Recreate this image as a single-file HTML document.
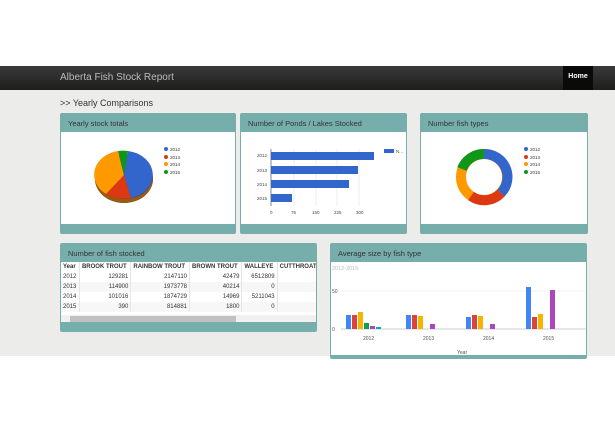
<!DOCTYPE html><html><head><style>
*{margin:0;padding:0;box-sizing:border-box}
body{width:615px;height:424px;background:#fff;font-family:"Liberation Sans",sans-serif;position:relative;overflow:hidden}
.nav{position:absolute;top:66px;left:0;width:615px;height:24px;background:linear-gradient(#3a3a3a,#1e1e1e);}
.nav .t{position:absolute;left:60px;top:6px;color:#bbb;font-size:10px}
.nav .h{position:absolute;left:563px;top:0;width:30px;height:24px;background:#0a0a0a;color:#fff;font-size:7px;font-weight:bold;text-align:center;line-height:22px}
.bg{position:absolute;top:90px;left:0;width:615px;height:266px;background:#ececea}
.yc{position:absolute;left:60px;top:98px;font-size:9px;color:#333}
.p{position:absolute;background:#fff;border:1px solid #76aeab;border-radius:2px}
.p .hd{background:#76aeab;height:18px;color:#333;font-size:7.5px;padding:5px 7px}
.p .ft{position:absolute;left:0;right:0;bottom:0;height:9px;background:#76aeab}
table{border-collapse:collapse;font-size:6px;color:#333}
td,th{padding:2px 2px;border-right:1px solid #e6e6e6;text-align:right;white-space:nowrap;height:10px}
th{text-align:left;font-weight:bold}
tr:nth-child(odd) td{background:#f7f7f7}
td:first-child{text-align:left}
</style></head><body>
<div class="nav"><div class="t">Alberta Fish Stock Report</div><div class="h">Home</div></div>
<div class="bg"></div>
<div class="yc">&gt;&gt; Yearly Comparisons</div>

<div class="p" style="left:60px;top:113px;width:176px;height:121px"><div class="hd">Yearly stock totals</div>
<svg width="176" height="94" style="position:absolute;left:0;top:18px">
<ellipse cx="63" cy="47" rx="29" ry="24" fill="#223f80"/>
<path d="M34 43 A29 24 0 0 0 92 43 L92 47 A29 24 0 0 1 34 47Z" fill="#9a5a10"/>
<path d="M63 43 L67 19 A29 24 0 0 1 70 66Z" fill="#3366cc"/>
<path d="M63 43 L70 66 A29 24 0 0 1 45 62Z" fill="#dc3912"/>
<path d="M63 43 L45 62 A29 24 0 0 1 57 19Z" fill="#ff9900"/>
<path d="M63 43 L57 19 A29 24 0 0 1 67 19Z" fill="#109618"/>
<g font-size="4.5" fill="#333"><circle cx="105" cy="17" r="2" fill="#3366cc"/><text x="109" y="19">2012</text><circle cx="105" cy="25" r="2" fill="#dc3912"/><text x="109" y="27">2013</text><circle cx="105" cy="32" r="2" fill="#ff9900"/><text x="109" y="34">2014</text><circle cx="105" cy="40" r="2" fill="#109618"/><text x="109" y="42">2015</text></g>
</svg><div class="ft"></div></div>

<div class="p" style="left:240px;top:113px;width:167px;height:121px"><div class="hd">Number of Ponds / Lakes Stocked</div>
<svg width="167" height="94" style="position:absolute;left:0;top:18px">
<g stroke="#ddd" stroke-width=".5"><line x1="53" y1="17" x2="53" y2="74"/><line x1="75" y1="17" x2="75" y2="74"/><line x1="96" y1="17" x2="96" y2="74"/><line x1="118" y1="17" x2="118" y2="74"/></g>
<line x1="30" y1="17" x2="30" y2="74" stroke="#333" stroke-width=".6"/>
<g fill="#3366cc"><rect x="30" y="20" width="103" height="8"/><rect x="30" y="34" width="87" height="8"/><rect x="30" y="48" width="78" height="8"/><rect x="30" y="62" width="21" height="8"/><rect x="143" y="17" width="10" height="4"/></g>
<g font-size="4.5" fill="#444"><text x="155" y="21">N...</text><text x="16" y="25">2012</text><text x="16" y="40">2013</text><text x="16" y="54">2014</text><text x="16" y="68">2015</text>
<text x="29" y="82">0</text><text x="50" y="82">75</text><text x="71" y="82">150</text><text x="93" y="82">225</text><text x="115" y="82">300</text></g>
</svg><div class="ft"></div></div>

<div class="p" style="left:420px;top:113px;width:168px;height:121px"><div class="hd">Number fish types</div>
<svg width="168" height="94" style="position:absolute;left:0;top:18px">
<g fill="none" stroke-width="10">
<circle cx="63" cy="45" r="23" stroke="#ff9900"/>
<path d="M63 22 A23 23 0 0 1 80 61" stroke="#3366cc"/>
<path d="M80 61 A23 23 0 0 1 50 64" stroke="#dc3912"/>
<path d="M41 37 A23 23 0 0 1 63 22" stroke="#109618"/>
</g>
<g font-size="4.5" fill="#333"><circle cx="105" cy="17" r="2" fill="#3366cc"/><text x="109" y="19">2012</text><circle cx="105" cy="25" r="2" fill="#dc3912"/><text x="109" y="27">2013</text><circle cx="105" cy="32" r="2" fill="#ff9900"/><text x="109" y="34">2014</text><circle cx="105" cy="40" r="2" fill="#109618"/><text x="109" y="42">2015</text></g>
</svg><div class="ft"></div></div>

<div class="p" style="left:60px;top:243px;width:257px;height:89px;overflow:hidden"><div class="hd">Number of fish stocked</div>
<table style="width:260px">
<tr><th>Year</th><th>BROOK TROUT</th><th>RAINBOW TROUT</th><th>BROWN TROUT</th><th>WALLEYE</th><th>CUTTHROAT</th></tr>
<tr><td>2012</td><td>129281</td><td>2147110</td><td>42479</td><td>6512809</td><td></td></tr>
<tr><td>2013</td><td>114900</td><td>1973778</td><td>40214</td><td>0</td><td></td></tr>
<tr><td>2014</td><td>101016</td><td>1874729</td><td>14969</td><td>5211043</td><td></td></tr>
<tr><td>2015</td><td>390</td><td>814881</td><td>1800</td><td>0</td><td></td></tr>
</table>
<div style="position:absolute;left:0;top:71px;width:257px;height:8px;background:#f0f0f0"><div style="position:absolute;left:9px;top:1px;width:166px;height:6px;background:#c1c1c1"></div></div>
<div class="ft"></div></div>

<div class="p" style="left:330px;top:243px;width:257px;height:116px"><div class="hd">Average size by fish type</div>
<svg width="257" height="98" style="position:absolute;left:0;top:18px">
<text x="1" y="8" font-size="5.5" fill="#bbb">2012-2015</text>
<line x1="10" y1="29" x2="255" y2="29" stroke="#e6e6e6" stroke-width=".5"/>
<line x1="10" y1="67" x2="255" y2="67" stroke="#999" stroke-width=".6"/>
<g font-size="5" fill="#555"><text x="1" y="31">50</text><text x="1" y="69">0</text><text x="32" y="78">2012</text><text x="92" y="78">2013</text><text x="152" y="78">2014</text><text x="212" y="78">2015</text><text x="126" y="92">Year</text></g>
<g><rect x="15" y="53" width="5" height="14" fill="#4285f4"/><rect x="21" y="53" width="5" height="14" fill="#db4437"/><rect x="27" y="50" width="5" height="17" fill="#f4b400"/><rect x="33" y="61" width="5" height="6" fill="#0f9d58"/><rect x="39" y="64" width="5" height="3" fill="#ab47bc"/><rect x="45" y="65" width="5" height="2" fill="#00acc1"/>
<rect x="75" y="53" width="5" height="14" fill="#4285f4"/><rect x="81" y="53" width="5" height="14" fill="#db4437"/><rect x="87" y="54" width="5" height="13" fill="#f4b400"/><rect x="99" y="62" width="5" height="5" fill="#ab47bc"/>
<rect x="135" y="55" width="5" height="12" fill="#4285f4"/><rect x="141" y="53" width="5" height="14" fill="#db4437"/><rect x="147" y="54" width="5" height="13" fill="#f4b400"/><rect x="159" y="62" width="5" height="5" fill="#ab47bc"/>
<rect x="195" y="25" width="5" height="42" fill="#4285f4"/><rect x="201" y="55" width="5" height="12" fill="#db4437"/><rect x="207" y="52" width="5" height="15" fill="#f4b400"/><rect x="219" y="28" width="5" height="39" fill="#ab47bc"/></g>
</svg>
<div style="position:absolute;left:0;right:0;bottom:0;height:3px;background:#76aeab"></div></div>
</body></html>
